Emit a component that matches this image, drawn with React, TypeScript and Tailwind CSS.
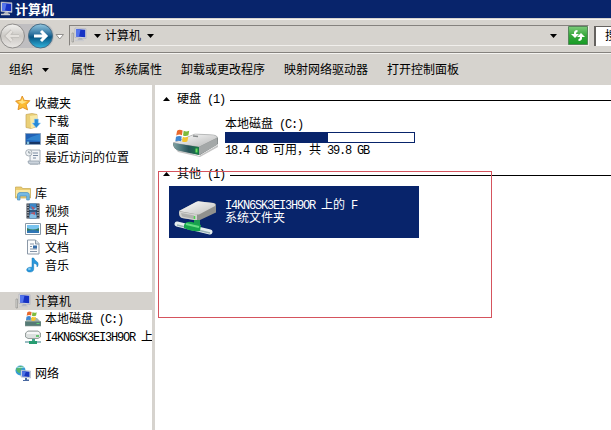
import type { ReactNode } from 'react';

const font = 'font-["Liberation_Sans","Noto_Sans_CJK_SC",sans-serif]';

// Half-width characters sit on a 6px grid, full-width ones on a 12px grid.
function Latin({ children }: { children: string }) {
  return (
    <span className='whitespace-pre font-["Liberation_Mono","Noto_Sans_CJK_SC",monospace] text-[12px] tracking-[-1.2px]'>
      {children}
    </span>
  );
}

function Monitor({ className = '' }: { className?: string }) {
  return (
    <svg className={className} width="16" height="16" viewBox="0 0 16 16">
      <path d="M1 6h1.500v9H1z" fill="#d9d9d4" stroke="#8b8b88" strokeWidth=".6" />
      <path d="M4 1l11 .8v9.700L4 10.500z" fill="#dfe1e6" stroke="#a5a8b5" strokeWidth=".6" />
      <path d="M5 2l9.200.7v7.500L5 9.500z" fill="#1632c4" />
      <path d="M5 2L9.500 2.400 8 9.600l-3-.1z" fill="#5475ec" />
      <path d="M8 11h3l1 2.500H6z" fill="#aeb2bd" />
      <path d="M4 13.500h9" stroke="#c9cace" strokeWidth="1.500" />
    </svg>
  );
}

function Star() {
  return (
    <svg width="16" height="16" viewBox="0 0 16 16">
      <path d="M7.2 1l2.1 4.400 5.500.3-3.600 4 1.400 5.200-4.800-2.400L3 14.700l1-5.200L.6 6l5-.8z" fill="#fcbb33" stroke="#dd8616" strokeWidth=".8" />
      <path d="M7.2 3l1.200 3.300 3.700.3L7 9 3 6.500l3.200-.4z" fill="#ffe48b" />
    </svg>
  );
}

function Downloads() {
  return (
    <svg width="16" height="16" viewBox="0 0 16 16">
      <path d="M1 1.500L7 .5l5 1v12l-6 2-5-1z" fill="#ead078" stroke="#c7a857" strokeWidth=".7" />
      <path d="M5 3l7-1v11l-6 2.500z" fill="#f8e9a6" />
      <path d="M9.300 6h4v4h2.200l-4.200 5-4.200-5h2.200z" fill="#258ad9" stroke="#a1d4f4" strokeWidth=".6" />
    </svg>
  );
}

function Desktop() {
  return (
    <svg width="16" height="16" viewBox="0 0 16 16">
      <path d="M.5 2.500h15v11H.5z" fill="#2161b5" stroke="#8ba2bd" />
      <path d="M1 9q6-4 14-6v7z" fill="#2f83ce" />
      <path d="M1 11h14v2H1z" fill="#163565" />
      <circle cx="3" cy="12" r="1.400" fill="#86c3de" />
    </svg>
  );
}

function Recent() {
  return (
    <svg width="16" height="16" viewBox="0 0 16 16">
      <path d="M5 1h10v12l-2 2H5z" fill="#f3f5f7" stroke="#8b98a5" strokeWidth=".8" />
      <path d="M8 4h5M8 6.500h5M8 9h3" stroke="#7889a0" />
      <path d="M3 12h11l1 3H5q-2 0-2-3z" fill="#cbd3dc" stroke="#8b98a5" strokeWidth=".7" />
      <circle cx="3.800" cy="3.800" r="3.200" fill="#edf1f4" stroke="#8c969f" strokeWidth=".7" />
      <path d="M3.800 2v2h1.800" fill="none" stroke="#66727d" strokeWidth=".7" />
    </svg>
  );
}

function Library() {
  return (
    <svg width="16" height="16" viewBox="0 0 16 16">
      <path d="M.5 2h6l1 1.500h8V13H.5z" fill="#ebcd72" stroke="#c6a850" strokeWidth=".7" />
      <path d="M1 5h14v6H1z" fill="#fae9a6" />
      <path d="M2.500 15V9.500Q3 7.500 5 7.500h7q2 0 2.300 2V15h-2.600v-4H5v4z" fill="#73b9e5" stroke="#4b8fbd" strokeWidth=".7" />
    </svg>
  );
}

function Video() {
  return (
    <svg width="16" height="16" viewBox="0 0 16 16">
      <path d="M1.500.5h13v15h-13z" fill="#303641" />
      <path d="M4.500.5h7v15h-7z" fill="#3c87c8" />
      <path d="M4.500 5l3.500 2 3.500-3v3h-7zM4.500 12L8 10l3.500 2v3h-7z" fill="#86bde4" />
      <path d="M6 3l4 2-2 2zM5 10l5-1v3z" fill="#b75766" />
      <path d="M3 1.500v13M13 1.500v13" stroke="#e4e8ee" strokeWidth="1.200" strokeDasharray="1.300 1.200" />
      <path d="M4 8h8" stroke="#252d3d" />
    </svg>
  );
}

function Picture() {
  return (
    <svg width="16" height="16" viewBox="0 0 16 16">
      <path d="M.5 2.500h15v11H.5z" fill="#fff" stroke="#8998a6" />
      <path d="M2 4h12v8H2z" fill="#79c4ef" />
      <path d="M2 7q6 3 12 0v3H2z" fill="#31795f" />
      <path d="M2 10q6-2 12 0v2H2z" fill="#2f76b6" />
    </svg>
  );
}

function Document() {
  return (
    <svg width="16" height="16" viewBox="0 0 16 16">
      <path d="M2.500 1h8L14 4.500V15H2.500z" fill="#fbfcfd" stroke="#8b98a7" />
      <path d="M10.500 1v4H14" fill="#d9e0e7" stroke="#8b98a7" />
      <path d="M5 5h4M5 7.500h2M5 10h7M5 12.500h7" stroke="#8494a8" />
      <path d="M8 6.500h4v3H8z" fill="#376da8" />
    </svg>
  );
}

function Music() {
  return (
    <svg width="16" height="16" viewBox="0 0 16 16">
      <path d="M7 1h1.700q.8 2.300 3 3.500c2.200 1.500 1.500 4.400.3 5.500.3-2.600-1.100-3.400-3.300-3.800V12c0 2-1.600 3-3.600 3-2.200 0-3.400-.9-3.400-2.300C1.700 11 4.200 9.800 7 10.300z" fill="#2997dc" stroke="#1878b7" strokeWidth=".5" />
      <ellipse cx="4.400" cy="12" rx="1.500" ry=".9" fill="#82cbf2" />
    </svg>
  );
}

function Flag() {
  return (
    <>
      <path d="M1 2.500Q3 1 6 2.300L5.400 6.500Q3 5.400.2 6.800z" fill="#e8692d" />
      <path d="M7 2.600Q9.500 3.800 12 2.500L11.300 6.600Q9 8 6.400 6.800z" fill="#7ebb3c" />
      <path d="M0 8Q3 6.500 5.200 7.800L4.600 12Q2.500 11-.6 12z" fill="#3f87d1" />
      <path d="M6.200 8Q8.500 9.200 11.100 7.900L10.400 12Q8 13.500 5.500 12.200z" fill="#f5c52e" />
    </>
  );
}

function SmallDisk() {
  return (
    <svg width="16" height="16" viewBox="0 0 16 16">
      <path d="M0 11l3-4h9l4 4v3.500H0z" fill="#a3b3ad" />
      <path d="M0 10.500h16V15H0z" fill="#557b76" stroke="#8a9b94" strokeWidth=".6" />
      <path d="M11.500 12.500h3" stroke="#63d770" />
      <g transform="translate(1.500 -1) scale(.85)"><Flag /></g>
    </svg>
  );
}

function SmallNetDisk() {
  return (
    <svg width="16" height="16" viewBox="0 0 16 16">
      <path d="M.5 4L3 2h10l2.500 2v4L13 9.500H3L.5 8z" fill="#dce0df" stroke="#828b89" strokeWidth=".8" />
      <path d="M2 4h12" stroke="#fff" strokeWidth="1.500" />
      <path d="M11 7h3" stroke="#43bd51" strokeWidth="1.500" />
      <path d="M7 10h3v3H7z" fill="#43a58a" />
      <path d="M0 13h16" stroke="#9bbdc3" strokeWidth="2" />
      <path d="M4 12h8v3H4z" fill="#279d71" />
    </svg>
  );
}

function Network() {
  return (
    <svg width="16" height="16" viewBox="0 0 16 16">
      <circle cx="5.500" cy="5.500" r="5" fill="#349dd5" />
      <path d="M1 4Q5-1 9 2L6 4 5 8Q2 8 1 4zM7 7l3-1-2 4z" fill="#55b66c" />
      <path d="M2 2q3 1 7 0" stroke="#bce9f5" fill="none" />
      <path d="M6 5l9.500 1v7L6 12z" fill="#dbe0ea" stroke="#96a4b9" strokeWidth=".5" />
      <path d="M7 6l7.500.8V12L7 11.200z" fill="#1735bd" />
      <path d="M7 6l4 .5-2 5-2-.3z" fill="#4d72e2" />
      <path d="M10 13h2v1.500h2V16H8v-1h2z" fill="#4868a0" />
    </svg>
  );
}

function LargeDisk() {
  return (
    <svg width="48" height="30" viewBox="0 0 48 30">
      <defs>
        <linearGradient id="diskTop" x1="0" y1="0" x2="1" y2="1">
          <stop stopColor="#ffffff" /><stop offset="1" stopColor="#b6b7b7" />
        </linearGradient>
        <linearGradient id="diskFront" x1="0" y1="0" x2="1" y2="0">
          <stop stopColor="#80a3a4" /><stop offset=".6" stopColor="#29545a" /><stop offset="1" stopColor="#167d45" />
        </linearGradient>
      </defs>
      <path d="M1 19l25 9 19-11v2L27 29 5 24z" fill="#c4c4c4" />
      <path d="M0 15L22 6l19 1q4 1 4 4v5L27 27 5 22q-4-1-5-5z" fill="#777d7d" />
      <path d="M0 15L22 6l19 1q4 1 3 3L26 19z" fill="url(#diskTop)" stroke="#a2a5a5" strokeWidth=".5" />
      <path d="M0 15l26 4v8L5 22.500q-4-2-5-7.500z" fill="url(#diskFront)" />
      <path d="M26 19l18-9q1 5 0 7L26 27z" fill="#a4a8a8" />
      <path d="M23.500 20.500v4" stroke="#65e45b" strokeWidth="2" />
      <path d="M20 8l5 .5" stroke="#878b8b" strokeWidth="1.500" />
      <g transform="translate(3 0) scale(1.100)"><Flag /></g>
    </svg>
  );
}

function LargeNetDisk() {
  return (
    <svg width="42" height="36" viewBox="0 0 42 36">
      <defs>
        <linearGradient id="netTop" x1="0" y1="0" x2="1" y2="1">
          <stop stopColor="#ffffff" /><stop offset="1" stopColor="#bfbfbd" />
        </linearGradient>
      </defs>
      <path d="M5 11L22 2q2-1 4-.5l14 1.500q3 1 3 4v5L26 20q-2 1-5 0L8 18q-3-1-3-5z" fill="#90918e" />
      <path d="M5 11L22 2q2-1 4-.5l13 1.500q3 1 2 3L26 14q-2 1-5 0z" fill="url(#netTop)" />
      <path d="M5 11.500l18 3v6L8 18q-3-1-3-6.500z" fill="#d2d2cf" />
      <path d="M7 13l13 2.500v3.500L8 16.500z" fill="#b0b1ae" />
      <path d="M20.500 16v3" stroke="#49d94b" strokeWidth="1.500" />
      <path d="M20 20h6v5h-6z" fill="#1c9d51" />
      <path d="M3 24l33 8" stroke="#e6eeee" strokeWidth="5" strokeLinecap="round" />
      <path d="M3 25l33 8" stroke="#98b2b4" strokeWidth="1.500" />
      <path d="M10 25q2-4 8-3l9 3-1 6q-7 1-16-3z" fill="#16a64c" />
      <path d="M12 24l13 3" stroke="#67dd84" strokeWidth="2" />
    </svg>
  );
}

function TreeRow({ icon, children, child = false, selected = false }: { icon: ReactNode; children: ReactNode; child?: boolean; selected?: boolean }) {
  return (
    <div className={`flex h-[18px] shrink-0 items-center gap-1 overflow-hidden whitespace-nowrap ${child ? 'pl-[25px]' : 'pl-[15px]'} ${selected ? 'bg-[#d5d2cd]' : ''}`}>
      <span className="shrink-0">{icon}</span>
      <span className="pt-px leading-[18px]">{children}</span>
    </div>
  );
}

function Down({ className = '' }: { className?: string }) {
  return <svg className={`shrink-0 ${className}`} width="7" height="4" viewBox="0 0 7 4"><path d="M0 0h7L3.500 4z" fill="#000" /></svg>;
}

function GroupHeader({ title }: { title: string }) {
  return (
    <div className="flex h-[18px] items-center pl-2">
      <svg width="7" height="4" viewBox="0 0 7 4"><path d="M0 4h7L3.500 0z" fill="#000" /></svg>
      <span className="ml-[7px] w-[53px] pt-px leading-[18px]">{title}<Latin> (1)</Latin></span>
      <span className="mt-[3px] h-px flex-1 bg-black" />
    </div>
  );
}

export default function App() {
  return (
    <div className={`relative flex h-[430px] w-[611px] flex-col overflow-hidden bg-white text-[12px] leading-[14px] text-black ${font}`}>
      <header className="flex h-[18px] shrink-0 items-center bg-[#08246b] font-bold text-white">
        <Monitor className="-ml-[3px]" />
        <span className="ml-[2px] text-[13px] leading-[17px]">计算机</span>
      </header>

      <nav className="flex h-[35px] shrink-0 items-start border-b border-[#85827e] bg-[#d6d3ce] pt-[7px] shadow-[inset_0_1px_0_#d6d3ce,inset_0_2px_0_#f6f5f3]">
        <svg className="-mt-[3px] shrink-0" width="66" height="28" viewBox="0 0 66 28">
          <defs>
            <linearGradient id="backButton" x1="0" y1="0" x2="0" y2="1">
              <stop stopColor="#f3f2f0" /><stop offset=".5" stopColor="#cbc8c4" /><stop offset="1" stopColor="#e9e7e4" />
            </linearGradient>
            <linearGradient id="nextButton" x1="0" y1="0" x2="0" y2="1">
              <stop stopColor="#94c9e1" /><stop offset=".45" stopColor="#286d9b" /><stop offset=".55" stopColor="#075583" /><stop offset="1" stopColor="#32b7df" />
            </linearGradient>
          </defs>
          <path d="M12 2h31q10 0 11 12-1 12-12 12H12z" fill="#bfbec0" />
          <circle cx="12.500" cy="14" r="12" fill="url(#backButton)" stroke="#8e8c8a" />
          <path d="M19 14H7m5-5l-5 5 5 5" fill="none" stroke="#b9b6b2" strokeWidth="4" />
          <path d="M19 14H7m5-5l-5 5 5 5" fill="none" stroke="#e4e1dd" strokeWidth="2.500" />
          <circle cx="40.500" cy="14" r="12" fill="url(#nextButton)" stroke="#476e87" />
          <path d="M34 14h12m-5-5l5 5-5 5" fill="none" stroke="#fff" strokeWidth="3" />
          <path d="M56 12.500h7.500L59.750 17z" fill="#fff" stroke="#92908d" />
        </svg>
        <div className="ml-[3px] flex h-[21px] w-[520px] shrink-0 items-center border border-b-[#f1efec] border-l-[#85827e] border-r-[#f1efec] border-t-[#85827e]">
          <Monitor className="ml-px -mt-0.5" />
          <Down className="ml-[7px]" />
          <span className="ml-[4px] w-9 whitespace-nowrap">计算机</span>
          <Down className="ml-[6px]" />
          <span className="flex-1" />
          <Down className="mr-[11px]" />
          <svg width="20" height="19" viewBox="0 0 20 19">
            <defs><linearGradient id="refresh" x1="0" y1="0" x2="0" y2="1"><stop stopColor="#7ccc7a" /><stop offset=".5" stopColor="#36a73b" /><stop offset="1" stopColor="#159b24" /></linearGradient></defs>
            <path d="M.5.5h19v18H.5z" fill="url(#refresh)" stroke="#55865a" />
            <path d="M9.500 4q-4 0-3.500 4h-3l4 4 4-4H8q-.2-2 1.500-2zM10.500 15q4 0 3.500-4h3l-4-4-4 4h3q.2 2-1.500 2z" fill="#fff" />
          </svg>
        </div>
        <div className="ml-[5px] mt-px h-5 w-6 shrink-0 overflow-hidden border-l-2 border-t border-[#65625f] bg-white pl-[9px] leading-[19px]">搜</div>
      </nav>

      <div className="flex h-8 shrink-0 items-center whitespace-nowrap border-t border-[#f5f4f1] bg-[#d6d3ce] pl-[9px]">
        <span className="w-6">组织</span><Down className="ml-[9px]" />
        <span className="ml-[22px]">属性</span>
        <span className="ml-[19px]">系统属性</span>
        <span className="ml-[19px]">卸载或更改程序</span>
        <span className="ml-[19px]">映射网络驱动器</span>
        <span className="ml-[19px]">打开控制面板</span>
      </div>

      <div className="flex min-h-0 flex-1">
        <aside className="flex w-[155px] shrink-0 flex-col border-r-[3px] border-[#d6d3ce] pt-[9px]">
          <TreeRow icon={<Star />}>收藏夹</TreeRow>
          <TreeRow child icon={<Downloads />}>下载</TreeRow>
          <TreeRow child icon={<Desktop />}>桌面</TreeRow>
          <TreeRow child icon={<Recent />}>最近访问的位置</TreeRow>
          <div className="h-[18px]" />
          <TreeRow icon={<Library />}>库</TreeRow>
          <TreeRow child icon={<Video />}>视频</TreeRow>
          <TreeRow child icon={<Picture />}>图片</TreeRow>
          <TreeRow child icon={<Document />}>文档</TreeRow>
          <TreeRow child icon={<Music />}>音乐</TreeRow>
          <div className="h-[18px]" />
          <TreeRow selected icon={<Monitor />}>计算机</TreeRow>
          <TreeRow child icon={<SmallDisk />}>本地磁盘<Latin> (C:)</Latin></TreeRow>
          <TreeRow child icon={<SmallNetDisk />}><Latin>I4KN6SK3EI3H9OR </Latin>上</TreeRow>
          <div className="h-[18px]" />
          <TreeRow icon={<Network />}>网络</TreeRow>
        </aside>

        <main className="min-w-0 flex-1 pt-[5px]">
          <GroupHeader title="硬盘" />
          <section className="flex h-[57px] pl-[18px] pt-[8px]">
            <div className="mt-[12px] w-[52px] shrink-0"><LargeDisk /></div>
            <div className="w-[190px]">
              <div className="h-4 leading-4">本地磁盘<Latin> (C:)</Latin></div>
              <div className="h-[11px] border border-[#08246b] bg-white"><div className="h-full w-[102px] bg-[#08246b]" /></div>
              <div className="whitespace-nowrap"><Latin>18.4 GB </Latin>可用，共<Latin> 39.8 GB</Latin></div>
            </div>
          </section>
          <GroupHeader title="其他" />
          <section className="ml-[14px] mt-[3px] flex h-[52px] w-[250px] bg-[#08246b] text-white">
            <div className="w-[56px] shrink-0 pl-[5px] pt-[14px]"><LargeNetDisk /></div>
            <div className="whitespace-nowrap pt-[13px] leading-[13px]">
              <div className="h-[13px]"><Latin>I4KN6SK3EI3H9OR </Latin>上的<Latin> F</Latin></div>
              <div className="h-[13px]">系统文件夹</div>
            </div>
          </section>
        </main>
      </div>
      <div className="pointer-events-none absolute left-[158px] top-[171px] h-[147px] w-[334px] border border-[#d5535d]" />
    </div>
  );
}
